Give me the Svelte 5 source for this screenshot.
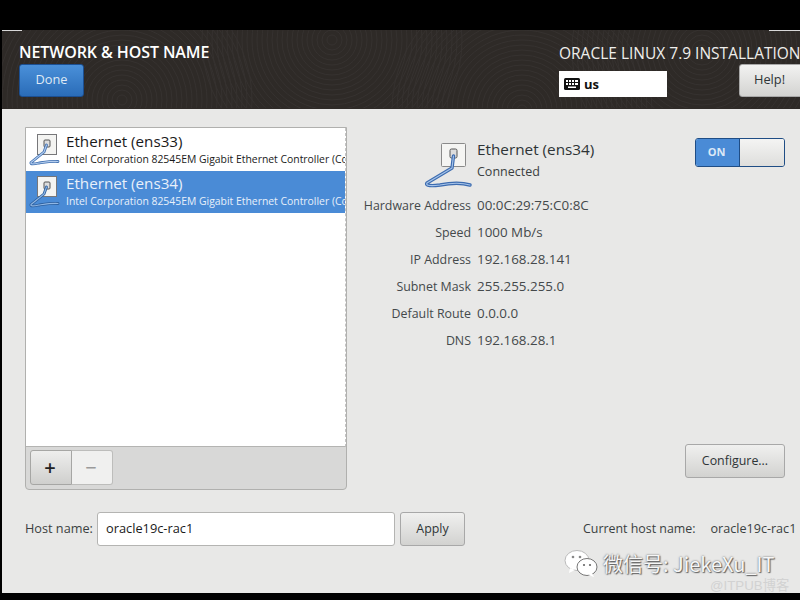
<script>
  const rows = [
    { label: 'Hardware Address', value: '00:0C:29:75:C0:8C' },
    { label: 'Speed', value: '1000 Mb/s' },
    { label: 'IP Address', value: '192.168.28.141' },
    { label: 'Subnet Mask', value: '255.255.255.0' },
    { label: 'Default Route', value: '0.0.0.0' },
    { label: 'DNS', value: '192.168.28.1' }
  ];
  const devices = [
    { name: 'Ethernet (ens33)', selected: false },
    { name: 'Ethernet (ens34)', selected: true }
  ];
  const rings = Array.from({ length: 26 }, (_, i) => 5 + i * 5);
  const centers = [[120, 70], [330, 10], [520, 80], [700, 20]];
</script>

<div class="screen">
  <main class="window">
    <header class="header">
      <svg class="texture" width="800" height="78" viewBox="0 0 800 78" aria-hidden="true">
        {#each centers as c}
          {#each rings as r}
            <circle cx={c[0]} cy={c[1]} r={r} fill="none" stroke="#363230" stroke-width="1" />
          {/each}
        {/each}
      </svg>
      <div class="head-left">
        <h1>NETWORK &amp; HOST NAME</h1>
        <button class="done">Done</button>
      </div>
      <div class="head-right">
        <div class="product">ORACLE LINUX 7.9 INSTALLATION</div>
        <div class="head-controls">
          <div class="kbd">
            <svg width="16" height="12" viewBox="0 0 16 12">
              <rect width="16" height="12" rx="1.5" fill="#111" />
              <g fill="#fff">
                <rect x="2" y="2" width="2" height="2" /><rect x="5" y="2" width="2" height="2" />
                <rect x="8" y="2" width="2" height="2" /><rect x="11" y="2" width="3" height="2" />
                <rect x="2" y="5" width="2" height="2" /><rect x="5" y="5" width="2" height="2" />
                <rect x="8" y="5" width="2" height="2" /><rect x="11" y="5" width="3" height="2" />
                <rect x="4" y="8.5" width="8" height="1.5" />
              </g>
            </svg>
            <span>us</span>
          </div>
          <button class="help">Help!</button>
        </div>
      </div>
    </header>

    <div class="body">
      <div class="columns">
        <section class="panel">
          <div class="list">
            {#each devices as d}
              <div class="device" class:selected={d.selected}>
                <svg class="dev-icon" width="34" height="34" viewBox="0 0 34 34">
                  <rect x="9.5" y="1.5" width="19" height="20" fill="#f4f4f2" stroke="#77777a" />
                  <rect x="16" y="7" width="6" height="7" rx="1" fill="#ddd" stroke="#555" />
                  <path d="M18.500 12 L16 19 L3 29.500 C2 31.500 6 31 11 30 C18 29 24 28 30 28.500" fill="none" stroke={d.selected ? '#2c5f9e' : '#3f6fb0'} stroke-width="2.800" stroke-linecap="round" stroke-linejoin="round" />
                  <path d="M18.500 12 L16 19 L3 29.500 C2 31.500 6 31 11 30 C18 29 24 28 30 28.500" fill="none" stroke={d.selected ? '#8fb6e4' : '#b4cdee'} stroke-width="1.100" stroke-linecap="round" stroke-linejoin="round" />
                </svg>
                <div class="dev-text">
                  <div class="dev-name">{d.name}</div>
                  <div class="dev-desc">Intel Corporation 82545EM Gigabit Ethernet Controller (Copper)</div>
                </div>
              </div>
            {/each}
          </div>
          <div class="toolbar">
            <div class="btn-group">
              <button class="tool add">+</button>
              <button class="tool remove">−</button>
            </div>
          </div>
        </section>

        <section class="details">
          <div class="detail-head">
            <svg class="big-icon" width="48" height="48" viewBox="0 0 48 48">
              <rect x="17.500" y="2.500" width="24" height="23" rx="1" fill="#f5f5f3" stroke="#8a8a8a" />
              <rect x="26" y="8" width="7" height="9" rx="1.500" fill="#ddd" stroke="#555" />
              <path d="M29.500 15 L28 27 L3 42 C1 45 8 45 16 44 C26 42 36 41 46 44" fill="none" stroke="#3d6cb0" stroke-width="3.400" stroke-linecap="round" stroke-linejoin="round" />
              <path d="M29.500 15 L28 27 L3 42 C1 45 8 45 16 44 C26 42 36 41 46 44" fill="none" stroke="#a8c5ea" stroke-width="1.100" stroke-linecap="round" stroke-linejoin="round" />
            </svg>
            <div class="head-text">
              <div class="head-name">Ethernet (ens34)</div>
              <div class="head-status">Connected</div>
            </div>
            <div class="switch">
              <div class="on">ON</div>
              <div class="knob"></div>
            </div>
          </div>
          <dl class="rows">
            {#each rows as r}
              <dt>{r.label}</dt>
              <dd>{r.value}</dd>
            {/each}
          </dl>
          <div class="configure-row">
            <button class="btn configure">Configure...</button>
          </div>
        </section>
      </div>

      <div class="host-row">
        <label class="host-label" for="host">Host name:</label>
        <input id="host" class="host-input" value="oracle19c-rac1" />
        <button class="btn apply">Apply</button>
        <div class="current">
          <span>Current host name:</span>
          <span class="current-value">oracle19c-rac1</span>
        </div>
      </div>
    </div>
  </main>

  <div class="watermark">
    <svg width="34" height="27" viewBox="0 0 34 27">
      <ellipse cx="13" cy="10.500" rx="12" ry="10" fill="#fff" stroke="#bbb" />
      <path d="M6 18 L5 23 L11 20 Z" fill="#fff" />
      <ellipse cx="23" cy="17" rx="10" ry="8.500" fill="#fff" stroke="#777" />
      <path d="M28 23 L30 27 L24 25 Z" fill="#fff" />
      <circle cx="9" cy="7" r="1.300" fill="#888" /><circle cx="16" cy="7" r="1.300" fill="#888" />
      <circle cx="20" cy="15" r="1.100" fill="#666" /><circle cx="26" cy="15" r="1.100" fill="#666" />
    </svg>
    <span class="wm-text">微信号: JiekeXu_IT</span>
  </div>
  <div class="wm-small">@ITPUB博客</div>
</div>

<style>
  :global(body) { margin: 0; background: #000; }
  .screen {
    position: relative;
    width: 800px;
    height: 600px;
    padding: 30px 0 7px 2px;
    box-sizing: border-box;
    background: #000;
    overflow: hidden;
    font-family: "Open Sans", "Noto Sans", sans-serif;
    color: #2e3436;
  }
  .window {
    position: relative;
    height: 563px;
    display: flex;
    flex-direction: column;
    background: #e8e8e7;
    overflow: hidden;
  }
  .window::before, .window::after {
    content: "";
    position: absolute;
    top: 0;
    height: 1px;
    background: #d8d8d8;
    z-index: 1;
  }
  .window::before { left: 0; width: 20px; }
  .window::after { right: 0; width: 31px; }
  .header {
    position: relative;
    height: 79px;
    flex: none;
    display: flex;
    justify-content: space-between;
    background: #2e2a27;
    overflow: hidden;
  }
  .texture { position: absolute; left: 0; top: 0; }
  .head-left, .head-right { position: relative; display: flex; flex-direction: column; }
  .head-left { padding: 12px 0 0 17px; }
  h1 {
    margin: 0;
    font-size: 16px;
    line-height: 20px;
    font-weight: 600;
    color: #fff;
    letter-spacing: -0.1px;
  }
  button { font-family: inherit; cursor: default; }
  .done {
    width: 65px;
    height: 33px;
    margin-top: 2px;
    padding: 0 0 4px;
    border: 1px solid #1b4f92;
    border-radius: 3px;
    background: linear-gradient(#4a90d9, #2a6cb8);
    color: #dfe9f5;
    font-size: 12.800px;
  }
  .head-right { width: 241px; flex: none; padding-top: 13px; box-sizing: border-box; }
  .product {
    font-size: 15.500px;
    line-height: 20px;
    color: #eeeeec;
    white-space: nowrap;
  }
  .head-controls { display: flex; justify-content: space-between; align-items: flex-end; margin-top: 1px; }
  .kbd {
    width: 108px;
    height: 26px;
    display: flex;
    align-items: center;
    gap: 4px;
    padding-left: 5px;
    box-sizing: border-box;
    background: #fff;
    font-size: 13px;
    font-weight: 700;
    color: #111;
  }
  .help {
    width: 65px;
    height: 33px;
    margin-right: -4px;
    padding: 0 4px 3px 0;
    border: 1px solid #a8a8a8;
    border-radius: 3px;
    background: linear-gradient(#f2f2f1, #d3d3d1);
    color: #2e3436;
    font-size: 12.800px;
  }
  .body { flex: 1; display: flex; flex-direction: column; padding: 18px 0 0 23px; }
  .columns { display: flex; height: 363px; }
  .panel {
    width: 322px;
    height: 363px;
    flex: none;
    box-sizing: border-box;
    display: flex;
    flex-direction: column;
    border: 1px solid #b0b0ae;
    border-radius: 0 0 4px 4px;
    background: #d8d8d7;
  }
  .list {
    height: 319px;
    flex: none;
    background: #fff;
    border-bottom: 1px solid #b4b4b2;
    border-right: 1px dashed #c4c4c4;
    box-sizing: border-box;
    overflow: hidden;
    padding-top: 1px;
  }
  .device {
    height: 42px;
    display: flex;
    overflow: hidden;
    padding-left: 2px;
    background: #fff;
    color: #1a1a1a;
  }
  .device.selected { background: #4a8bd6; color: #e8f0fa; }
  .dev-icon { flex: none; margin-top: 4px; }
  .dev-text { margin-left: 4px; white-space: nowrap; min-width: 0; }
  .dev-name { font-size: 15.200px; line-height: 20px; margin-top: 2px; }
  .dev-desc { font-size: 10.400px; line-height: 14px; margin-top: 1px; }
  .toolbar { flex: 1; padding: 3px 0 0 4px; }
  .btn-group { display: flex; width: 83px; height: 35px; }
  .tool {
    flex: 1;
    padding: 0 2px 0 0;
    border: 1px solid #bdbdbb;
    font-size: 20px;
    line-height: 1;
  }
  .add {
    border-radius: 3px 0 0 3px;
    border-color: #a6a6a4;
    background: linear-gradient(#eeeeed, #cfcfcd);
    color: #222;
    font-weight: 600;
  }
  .remove {
    border-left: 0;
    border-radius: 0 3px 3px 0;
    background: #f0f0ef;
    color: #9a9a9a;
  }
  .details { flex: 1; display: flex; flex-direction: column; position: relative; }
  .detail-head { display: flex; height: 54px; padding-top: 11px; box-sizing: content-box; }
  .big-icon { flex: none; margin-left: 77px; margin-top: 3px; }
  .head-text { margin-left: 5px; flex: none; width: 218px; }
  .head-name { font-size: 15.300px; line-height: 20px; font-weight: 500; color: #2e3436; margin-top: 1px; }
  .head-status { font-size: 12.500px; line-height: 18px; margin-top: 4px; color: #3a3f41; }
  .switch {
    width: 90px;
    height: 29px;
    flex: none;
    display: flex;
    box-sizing: border-box;
    border: 1px solid #1f4d85;
    border-radius: 3px;
    overflow: hidden;
  }
  .on {
    width: 44px;
    padding-right: 2px;
    box-sizing: border-box;
    background: #4a8bd6;
    color: #dce8f6;
    font-size: 11px;
    font-weight: 700;
    line-height: 25px;
    text-align: center;
    border-right: 1px solid #1f4d85;
  }
  .knob { flex: 1; background: linear-gradient(#f4f4f3, #dededc); }
  .rows {
    margin: 0;
    display: grid;
    grid-template-columns: 124px auto;
    column-gap: 6px;
    grid-auto-rows: 27px;
    width: 260px;
    line-height: 27px;
    white-space: nowrap;
  }
  .rows dt { text-align: right; color: #44494b; font-size: 12.400px; }
  .rows dd { margin: 0; color: #44494b; font-size: 13.400px; }
  .configure-row { display: flex; justify-content: flex-end; margin-top: auto; padding-bottom: 12px; padding-right: 15px; }
  .btn {
    border: 1px solid #a8a8a8;
    border-radius: 3px;
    background: linear-gradient(#f0f0ef, #d2d2d0);
    color: #2e3436;
    font-size: 12.400px;
    padding: 0 0 2px;
  }
  .configure { width: 100px; height: 34px; }
  .host-row { display: flex; align-items: center; height: 34px; margin-top: 22px; font-size: 12.400px; color: #3a3f41; }
  .host-label { width: 72px; flex: none; white-space: nowrap; font-size: 12.700px; padding-bottom: 2px; }
  .host-input {
    width: 298px;
    height: 34px;
    flex: none;
    box-sizing: border-box;
    padding: 0 8px 2px;
    border: 1px solid #b4b4b2;
    border-radius: 3px;
    background: #fff;
    color: #1a1a1a;
    font-family: inherit;
    font-size: 12.800px;
  }
  .apply { width: 65px; height: 34px; flex: none; margin-left: 5px; }
  .current { margin-left: 118px; display: flex; white-space: nowrap; padding-bottom: 2px; }
  .current-value { margin-left: 15px; font-size: 12.600px; }
  .watermark {
    position: absolute;
    left: 564px;
    top: 549px;
    display: flex;
    align-items: center;
    gap: 5px;
    height: 28px;
  }
  .wm-text {
    font-family: "Noto Sans CJK SC", sans-serif;
    font-size: 20px;
    color: #f6f6f6;
    text-shadow: 0 0 2px #555, 1px 1px 1px #666;
    white-space: nowrap;
  }
  .wm-small {
    position: absolute;
    left: 710px;
    top: 578px;
    font-family: "Liberation Sans", "Noto Sans CJK SC", sans-serif;
    font-size: 13.300px;
    line-height: 16px;
    color: #d2d2d2;
    white-space: nowrap;
  }
</style>
